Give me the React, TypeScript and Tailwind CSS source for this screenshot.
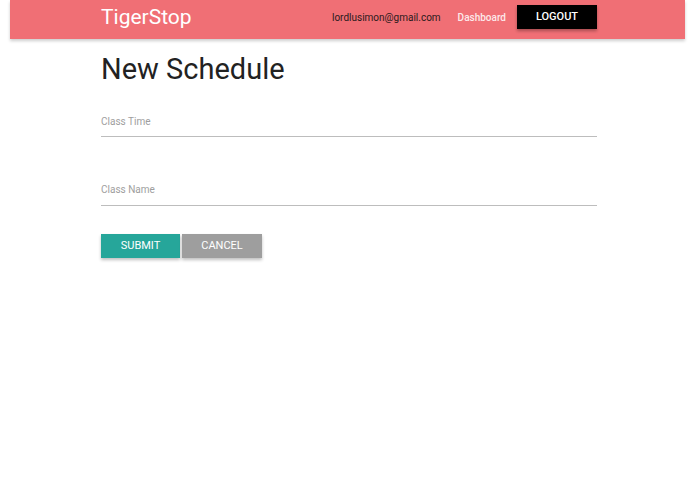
export default function App() {
  return (
    <div className="min-h-screen bg-white px-[10px]" style={{ fontFamily: 'Roboto, "Liberation Sans", sans-serif' }}>
      <nav className="h-[39px] bg-[#f06f75] shadow-[0_2px_3px_rgba(0,0,0,0.2)]">
        <div className="ml-[91px] flex h-full w-[496px] items-center justify-between">
          <a className="mb-[3px] text-[21px] text-white">TigerStop</a>
          <ul className="mb-[5px] flex items-center text-[10px]">
            <li className="mr-[17px] text-[#2b1a1c]">lordlusimon@gmail.com</li>
            <li className="mr-[11px] font-medium text-[#fde9ea]">Dashboard</li>
            <li>
              <button className="h-[24px] w-[80px] bg-black text-[11px] font-medium text-white shadow-[0_2px_3px_rgba(0,0,0,0.3)]">
                LOGOUT
              </button>
            </li>
          </ul>
        </div>
      </nav>
      <div className="ml-[91px] w-[496px]">
        <h1 className="mt-[14px] text-[29px] leading-[32px] text-[#222]">New Schedule</h1>
        <form className="mt-[12px]">
          <div className="h-[40px] border-b border-[#bdbdbd] pt-[18px]">
            <label className="block text-[10px] leading-[14px] text-[#9e9e9e]">Class Time</label>
          </div>
          <div className="mt-[29px] h-[40px] border-b border-[#bdbdbd] pt-[17px]">
            <label className="block text-[10px] leading-[14px] text-[#9e9e9e]">Class Name</label>
          </div>
          <div className="mt-[28px] flex gap-[2px]">
            <button type="button" className="h-[24px] w-[79px] bg-[#26a69a] text-[11px] text-white shadow-[0_2px_3px_rgba(0,0,0,0.25)]">
              SUBMIT
            </button>
            <button type="button" className="h-[24px] w-[80px] bg-[#9e9e9e] text-[11px] text-white shadow-[0_2px_3px_rgba(0,0,0,0.25)]">
              CANCEL
            </button>
          </div>
        </form>
      </div>
    </div>
  );
}
